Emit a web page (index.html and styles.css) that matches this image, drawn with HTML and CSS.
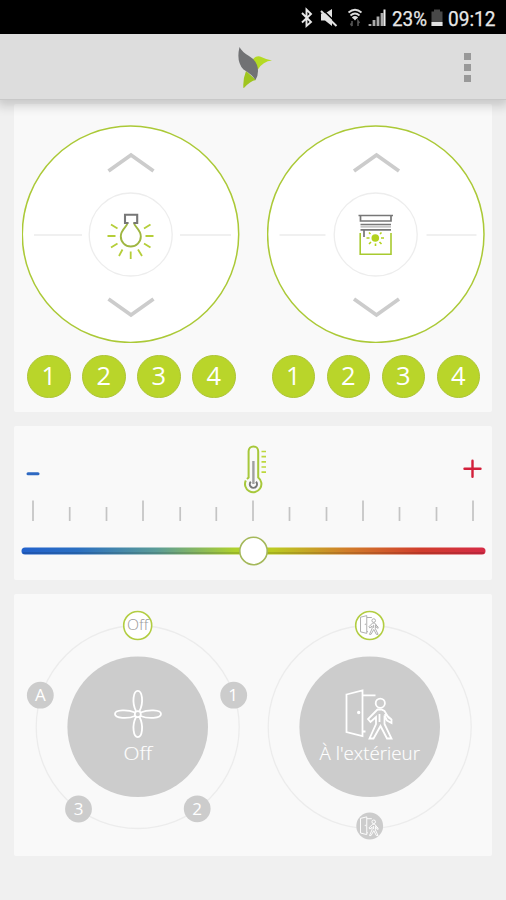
FILE: index.html
```html
<!DOCTYPE html>
<html lang="fr">
<head>
<meta charset="utf-8">
<title>Commande</title>
<link rel="stylesheet" href="styles.css">
</head>
<body>
<svg class="defs" width="0" height="0" aria-hidden="true">
  <defs>
    <g id="door">
      <path d="M346.500 694.500L362.500 690.500V736L346.500 732ZM363 695.300H375.500M363 731.500H365.500"/>
      <circle cx="358.700" cy="712.500" r=".8"/>
      <circle cx="380.300" cy="703.200" r="4.600"/>
      <path d="M377.500 709.500L368 719L370.500 722L376 717V724L369.500 738.500H373.500L380.500 726L387 738.500H391.500L384.500 724V715.500L387 720.500L391.500 723V719.500L388.500 717.500L384.500 711L381.500 709.500ZM379.500 714V722M384.500 713.500L391.500 719.500"/>
    </g>
  </defs>
</svg>
<header class="status">
  <svg width="506" height="34" viewBox="0 0 506 34">
    <path class="bluetooth" d="M302 13L311 22L306.500 26V9.500L311 14L302 22.500"/>
    <path class="light" d="M321 13.500H325L332 9V26L325 20.500H321Z"/>
    <path class="slash" d="M322.500 9.500L338 24.500"/>
    <path class="stroke-white" d="M321 11L336.500 26"/>
    <path class="wifi" d="M348.500 12.500Q355 7 361.500 12.500M350.500 15.500Q355 11.500 359.500 15.500M352.500 18Q355 16 357.500 18"/>
    <path class="light" d="M352.500 17.500L355 20.500L357.500 17.500Z"/>
    <path class="data" d="M352 21V26M350.500 23.500L352 26M358 26V21L359.500 23"/>
    <path class="signal" d="M370 26V24M374 26V20M378 26V16.500M382 26V13"/><path class="signal bright" d="M384.500 26V9.500"/>
    <text x="392" y="25.500" textLength="35" lengthAdjust="spacingAndGlyphs">23%</text>
    <path class="battery" d="M431.500 11.500H434V9.500H440V11.500H442.500V26H431.500Z"/>
    <path class="light" d="M431.500 22H442.500V26H431.500Z"/>
    <text x="448" y="25.500" textLength="47.500" lengthAdjust="spacingAndGlyphs">09:12</text>
  </svg>
</header>
<nav class="bar">
  <span></span>
  <svg class="logo" width="36" height="42" viewBox="236 45 36 42">
    <path class="leaf" d="M252.500 59Q255 54.500 260 55.500Q265 58 272 59.500Q263 60 257.500 69Z"/>
    <path class="leaf dark-leaf" d="M246 70L256 79Q250 80 243.500 87.500Q242.500 79 246 70Z"/>
    <path class="wing" d="M239.500 46Q242 51 249 55Q258 60 258 70Q258 75 255.500 79Q252 73.500 243.500 68.500Q236 61 239.500 46Z"/>
  </svg>
  <button class="menu" aria-label="Menu"><i></i><i></i><i></i></button>
</nav>
<main>
  <section class="panel remotes">
    <div class="remote">
      <svg width="218" height="218" viewBox="22 125 218 218">
        <circle class="dial" cx="130.500" cy="234.200" r="108.200"/>
        <path class="divider" d="M34 235H82M180 235H231"/>
        <circle class="hub" cx="130.700" cy="234.500" r="41.500"/>
        <path class="arrow" d="M108.500 171L131 155L153.500 171M108.500 299L131 315L153.500 299"/>
        <path class="bulb" d="M127.500 222.500C127.500 227 120.800 229 120.800 236.500A10 10 0 0 0 140.800 236.500C140.800 229 134 227 134 222.500"/>
        <path class="rays" d="M111 224.500L117.500 228.500M107.500 236H115.500M111 247.500L117.500 243.500M119 256L122.500 249.500M130.700 259V251.500M142 256L138 249.500M150.500 247.500L144 243.500M153.500 236H145.500M150.500 224.500L144 228.500"/>
        <path class="socket" d="M128.500 223H125V214.700H137.200V223H133.500"/>
      </svg>
      <div class="scenes"><button>1</button><button>2</button><button>3</button><button>4</button></div>
    </div>
    <div class="remote">
      <svg width="218" height="218" viewBox="266.500 125 218 218">
        <circle class="dial" cx="375.300" cy="234.200" r="108.200"/>
        <path class="divider" d="M279 235H325M426 235H476"/>
        <circle class="hub" cx="375.200" cy="234.500" r="41.500"/>
        <path class="arrow" d="M353.500 171L376 155L398.500 171M353.500 299L376 315L398.500 299"/>
        <path class="window" d="M359.700 233V254.200H390.500V233"/>
        <path class="blind" d="M358 215.500H392.500M360 216V221H390.500V216M360 224.500H390.500M360 229.800H390.500M363.500 230V237"/>
        <path class="slat" d="M360 226.700H390.500"/>
        <circle class="sun" cx="374.800" cy="238" r="3.800"/>
        <path class="sunrays" d="M366 238H369M380.500 238H383.500M375 243.500V246M368.500 232.500L370 234M381 232.500L379.500 234M368.500 244L370.500 242M381 244L379 242"/>
      </svg>
      <div class="scenes"><button>1</button><button>2</button><button>3</button><button>4</button></div>
    </div>
  </section>
  <section class="panel temperature">
    <svg width="478" height="154" viewBox="14 426 478 154">
      <defs><linearGradient id="heat" gradientUnits="userSpaceOnUse" x1="22" x2="486" y1="0" y2="0">
        <stop offset="0" stop-color="#2362cc"/><stop offset=".12" stop-color="#2b6fc1"/><stop offset=".29" stop-color="#5b9c97"/><stop offset=".46" stop-color="#afd12d"/><stop offset=".54" stop-color="#bccb22"/><stop offset=".7" stop-color="#d17d2a"/><stop offset=".86" stop-color="#d13d2d"/><stop offset="1" stop-color="#d52b46"/>
      </linearGradient></defs>
      <path class="minus" d="M28 473.700H38"/>
      <path class="plus" d="M464.500 468.800H480.500M472.500 460.800V476.800"/>
      <path class="thermo" d="M245.800 480.500A8.200 8.200 0 1 0 258.200 477.500V451.200A4.800 4.800 0 0 0 248.600 451.200V477.500L247 479"/>
      <path class="marks" d="M261.500 451.500H266M261.500 456.700H266M261.500 461.900H266M261.500 467H266M261.500 472.200H266"/>
      <path class="mercury" d="M253.400 461V484"/>
      <path class="ring" d="M250.800 481.700A3.600 3.600 0 1 0 256 481.700"/>
      <path class="ticks" d="M33 500.500V521M143 500.500V521M253 500.500V521M363 500.500V521M473 500.500V521M69.700 507V521M106.500 507V521M180.200 507V521M216.300 507V521M289.500 507V521M326.500 507V521M399.500 507V521M436.500 507V521"/>
      <rect x="21.500" y="547.500" width="464" height="7" rx="3.500" fill="url(#heat)"/>
      <path class="shade" d="M23 553H484"/>
      <circle class="thumb" cx="253.500" cy="551" r="13.700"/>
    </svg>
  </section>
  <section class="panel modes">
    <svg width="478" height="262" viewBox="14 594 478 262">
      <circle class="orbit" cx="137.700" cy="727" r="101.500"/>
      <circle class="core" cx="137.700" cy="726.800" r="70.300"/>
      <circle class="node on" cx="137.700" cy="625.500" r="14"/>
      <circle class="node" cx="40.300" cy="695.200" r="13.400"/>
      <circle class="node" cx="233.700" cy="695.200" r="13.400"/>
      <circle class="node" cx="78.500" cy="809" r="13.400"/>
      <circle class="node" cx="197.200" cy="808.800" r="13.400"/>
      <g class="fan">
        <circle cx="137.800" cy="714.200" r="3"/>
        <path d="M136 711C131.500 702 133.500 690.800 137.800 690.800S144 702 139.500 711M136 717C131.500 726 133.500 737.200 137.800 737.200S144 726 139.500 717M135 712.500C128 709.500 115 709.500 115 714S128 719 135 716M140.600 712.500C148 709.500 161 709.500 161 714S148 719 140.600 716"/>
      </g>
      <text class="small gray" x="127" y="630.200" textLength="21.500" lengthAdjust="spacingAndGlyphs">Off</text>
      <text class="digit" x="40.300" y="701">A</text>
      <text class="digit" x="233" y="701">1</text>
      <text class="digit" x="78.500" y="815">3</text>
      <text class="digit" x="197.200" y="815">2</text>
      <text class="label" x="123.500" y="760" textLength="28.500" lengthAdjust="spacingAndGlyphs">Off</text>
      <circle class="orbit" cx="369.700" cy="727" r="101.500"/>
      <circle class="core" cx="369.700" cy="726.800" r="70.300"/>
      <circle class="node on" cx="369.700" cy="625.500" r="14"/>
      <circle class="node" cx="369.700" cy="826" r="13.400"/>
      <use class="door" href="#door"/>
      <use class="door mini gray-line" href="#door" transform="translate(369.300 624.800) scale(.39) translate(-369 -714)"/>
      <use class="door mini" href="#door" transform="translate(369.300 826) scale(.39) translate(-369 -714)"/>
      <text class="label" x="319.500" y="760" textLength="100.500" lengthAdjust="spacingAndGlyphs">À l'extérieur</text>
    </svg>
  </section>
</main>
</body>
</html>
```

FILE: styles.css
```css
* { box-sizing: border-box; }
body { margin: 0; height: 900px; overflow: hidden; background: #f0f0f0; font-family: "Open Sans", sans-serif; }
svg { display: block; fill: none; }
.defs { position: absolute; }
.status { height: 34px; background: #000; }
.status text { font: 21px Roboto, sans-serif; fill: #e8e8e8; stroke: #e8e8e8; stroke-width: .25; }
.light { fill: #e2e2e2; }
.bluetooth { stroke: #e8e8e8; stroke-width: 1.9; }
.stroke-white { stroke: #e2e2e2; stroke-width: 2; }
.slash { stroke: #000; stroke-width: 1.6; }
.wifi { stroke: #ddd; stroke-width: 1.8; }
.data { stroke: #555; stroke-width: 1.6; }
.signal { stroke: #aaa; stroke-width: 2.8; }
.signal.bright { stroke: #eee; stroke-width: 2; }
.battery { fill: #484848; }
.bar { position: relative; display: grid; grid-template-columns: 1fr auto 1fr; align-items: center; height: 66px; background: #ddd; border-bottom: 1px solid #c8c8c8; box-shadow: 0 3px 10px 3px rgba(0,0,0,.17); z-index: 1; }
.logo { margin: 0 0 0 2px; }
.leaf { fill: #b4da23; }
.dark-leaf { fill: #9fc51f; }
.wing { fill: #717274; }
.menu { display: grid; gap: 4px; justify-self: end; margin: 2px 35px 0 0; padding: 0; border: 0; background: none; }
.menu i { width: 7px; height: 7px; background: #999; }
main { display: flex; flex-direction: column; gap: 14px; padding: 4px 14px 0; }
.panel { background: #f9f9f9; border-radius: 2px; }
.remotes { display: flex; justify-content: space-between; height: 308px; padding: 21px 7.500px 0 8px; }
.remote { width: 218px; }
.dial { fill: #fff; stroke: #abc937; stroke-width: 1.5; }
.hub { stroke: #ededed; stroke-width: 1.3; }
.divider { stroke: #ebebeb; stroke-width: 1.5; }
.arrow { stroke: #ccc; stroke-width: 3.8; }
.rays { stroke: #b5ce39; stroke-width: 1.8; }
.bulb { stroke: #9fb641; stroke-width: 1.9; }
.socket { stroke: #777; stroke-width: 2.1; }
.window { stroke: #a8ca30; stroke-width: 1.6; }
.blind { stroke: #777; stroke-width: 1.7; }
.slat { stroke: #c5c5c5; stroke-width: 2; }
.sun { fill: #b3d21f; }
.sunrays { stroke: #b3d21f; stroke-width: 1.6; }
.scenes { display: flex; gap: 11.500px; margin: 11.500px 0 0 5px; }
.scenes button { flex: none; width: 43.500px; height: 43.500px; padding: 0 0 1px; border: 1px solid #adc436; border-radius: 50%; background: #b9d52a; color: #fff; font: 25.500px/1 "Open Sans", sans-serif; }
.minus { stroke: #2e69c2; stroke-width: 3; stroke-linecap: round; }
.plus { stroke: #d3203b; stroke-width: 2.4; stroke-linecap: round; }
.thermo { stroke: #a7c83b; stroke-width: 2; }
.marks { stroke: #bdd73c; stroke-width: 1.7; }
.mercury { stroke: #a0a0a0; stroke-width: 2.4; }
.ring { stroke: #777; stroke-width: 2; }
.ticks { stroke: #c4c4c4; stroke-width: 1.7; }
.shade { stroke: #000; stroke-opacity: .12; stroke-width: 2; }
.thumb { fill: #fff; stroke: #a4b85a; stroke-width: 1.6; }
.orbit { stroke: #ececec; stroke-width: 1.3; }
.core, .node { fill: #ccc; }
.node.on { fill: #fff; stroke: #b2cd42; stroke-width: 1.6; }
.fan { stroke: #fff; stroke-width: 1.8; }
.door { stroke: #fff; stroke-width: 1.8; }
.door.mini { stroke-width: 2.4; }
.door.gray-line { stroke: #aaa; }
.label { fill: #fff; font: 300 18.500px "Open Sans", sans-serif; stroke: #fff; stroke-width: .15; }
.small { font: 300 14.500px "Open Sans", sans-serif; }
.gray { fill: #999; }
.digit { fill: #fff; font: 17px "Open Sans", sans-serif; text-anchor: middle; }
```
